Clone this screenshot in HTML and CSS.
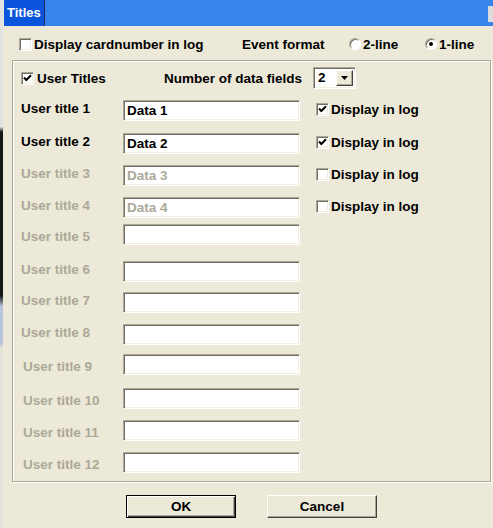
FILE: index.html
```html
<!DOCTYPE html>
<html lang="en">
<head>
    <meta charset="UTF-8">
    <meta name="viewport" content="width=device-width, initial-scale=1.0">
    <title>Titles</title>
    <link rel="stylesheet" href="styles.css">
</head>
<body>
    <div class="desk-edge"></div>

    <div class="window">
        <header class="titlebar">
            <span class="title-tab">Titles</span>
            <span class="title-stub"></span>
        </header>

        <div class="top-row">
            <label class="opt opt-card"><span class="check"></span>Display cardnumber in log</label>
            <span class="opt-event">Event format</span>
            <label class="opt opt-radio"><span class="radio"></span>2-line</label>
            <label class="opt"><span class="radio on"></span>1-line</label>
        </div>

        <section class="group">
            <div class="group-head">
                <label class="opt head-check">
                    <span class="check"><svg viewBox="0 0 13 13"><path d="M3 5.5 L5.3 8 L10 3.2" /></svg></span>User Titles
                </label>
                <span class="fields-label">Number of data fields</span>
                <div class="combo">
                    <span class="combo-value">2</span>
                    <span class="combo-btn"><svg viewBox="0 0 7 4"><polygon points="0,0 7,0 3.5,4" /></svg></span>
                </div>
            </div>

            <div class="titles">
                <div class="title-row">
                    <span class="row-label">User title 1</span>
                    <input class="field" type="text" value="Data 1">
                    <label class="opt log-check"><span class="check"><svg viewBox="0 0 13 13"><path d="M3 5.5 L5.3 8 L10 3.2" /></svg></span>Display in log</label>
                </div>
                <div class="title-row">
                    <span class="row-label">User title 2</span>
                    <input class="field" type="text" value="Data 2">
                    <label class="opt log-check"><span class="check"><svg viewBox="0 0 13 13"><path d="M3 5.5 L5.3 8 L10 3.2" /></svg></span>Display in log</label>
                </div>
                <div class="title-row">
                    <span class="row-label off">User title 3</span>
                    <input class="field" type="text" value="Data 3" disabled>
                    <label class="opt log-check"><span class="check"></span>Display in log</label>
                </div>
                <div class="title-row">
                    <span class="row-label off">User title 4</span>
                    <input class="field" type="text" value="Data 4" disabled>
                    <label class="opt log-check"><span class="check"></span>Display in log</label>
                </div>
                <div class="title-row">
                    <span class="row-label off low">User title 5</span>
                    <input class="field" type="text" disabled>
                </div>
                <div class="title-row">
                    <span class="row-label off">User title 6</span>
                    <input class="field" type="text" disabled>
                </div>
                <div class="title-row">
                    <span class="row-label off">User title 7</span>
                    <input class="field" type="text" disabled>
                </div>
                <div class="title-row">
                    <span class="row-label off">User title 8</span>
                    <input class="field" type="text" disabled>
                </div>
                <div class="title-row">
                    <span class="row-label off wide low">User title 9</span>
                    <input class="field" type="text" disabled>
                </div>
                <div class="title-row">
                    <span class="row-label off wide low">User title 10</span>
                    <input class="field" type="text" disabled>
                </div>
                <div class="title-row">
                    <span class="row-label off wide low">User title 11</span>
                    <input class="field" type="text" disabled>
                </div>
                <div class="title-row">
                    <span class="row-label off wide low">User title 12</span>
                    <input class="field" type="text" disabled>
                </div>
            </div>
        </section>

        <div class="buttons">
            <button class="btn default" type="button">OK</button>
            <button class="btn" type="button">Cancel</button>
        </div>
    </div>
</body>
</html>
```

FILE: styles.css
```css
* {
    margin: 0;
    padding: 0;
    box-sizing: border-box;
}

body {
    display: flex;
    width: 493px;
    height: 528px;
    overflow: hidden;
    background: #ece9d8;
    font-family: "Liberation Sans", Arial, sans-serif;
    font-size: 13.5px;
    font-weight: bold;
    color: #000;
}

/* bit of desktop peeking out on the left */
.desk-edge {
    width: 3px;
    background: linear-gradient(to bottom, #e2e2e2 0, #e2e2e2 24%, #161616 25%, #161616 56%, #b8c4dc 58%, #b8c4dc 65%, #e6e4da 66%);
}

.window {
    flex: 1;
    display: flex;
    flex-direction: column;
}

/* Title bar */
.titlebar {
    height: 26px;
    display: flex;
    margin-left: 1px;
    background: #3784ec;
}

.title-tab {
    width: 41px;
    padding-left: 3px;
    background: #0a55dc;
    border-right: 1px solid #1b2c66;
    color: #fff;
    font-size: 13px;
    line-height: 26px;
}

.title-stub {
    margin-left: auto;
    width: 5px;
    height: 16px;
    margin-top: 6px;
    background: #dcdcdc;
}

/* checkbox / radio bits */
.opt {
    display: flex;
    align-items: center;
    gap: 2px;
    white-space: nowrap;
}

.check {
    width: 13px;
    height: 13px;
    flex: none;
    background: #fff;
    border: 1px solid;
    border-color: #aca899 #fff #fff #aca899;
    box-shadow: inset 1px 1px 0 #716f64, inset -1px -1px 0 #f1efe2;
}

.check svg {
    display: block;
    width: 13px;
    height: 13px;
    margin: -1px;
}

.check path {
    fill: none;
    stroke: #000;
    stroke-width: 2;
}

.radio {
    width: 12px;
    height: 12px;
    flex: none;
    border-radius: 50%;
    background: #fff;
    border: 1px solid;
    border-color: #aca899 #fff #fff #aca899;
    box-shadow: inset 1px 1px 0 #716f64;
    position: relative;
}

.radio.on::after {
    content: "";
    position: absolute;
    left: 3px;
    top: 3px;
    width: 4px;
    height: 4px;
    border-radius: 50%;
    background: #000;
}

/* Top row */
.top-row {
    display: flex;
    align-items: center;
    height: 20px;
    margin-top: 8px;
    padding-left: 16px;
}

.opt-card {
    width: 223px;
}

.opt-event {
    width: 107px;
}

.opt-radio {
    width: 76px;
}

/* Group box */
.group {
    width: 479px;
    height: 422px;
    margin: 6px 0 0 9px;
    padding: 6px 0 0 8px;
    border: 1px solid #aca899;
    box-shadow: inset 1px 1px 0 #fff, 1px 1px 0 #fff;
}

.group-head {
    display: flex;
    align-items: center;
    height: 22px;
}

.head-check {
    width: 143px;
    gap: 3px;
}

.fields-label {
    width: 149px;
}

.combo {
    display: flex;
    width: 43px;
    height: 22px;
    background: #fff;
    border: 1px solid;
    border-color: #aca899 #fff #fff #aca899;
    box-shadow: inset 1px 1px 0 #716f64, inset -1px -1px 0 #f1efe2;
    padding: 2px 2px 2px 4px;
}

.combo-value {
    flex: 1;
    line-height: 16px;
}

.combo-btn {
    width: 17px;
    display: flex;
    align-items: center;
    justify-content: center;
    background: #ece9d8;
    border: 1px solid;
    border-color: #fff #404040 #404040 #fff;
    box-shadow: inset -1px -1px 0 #aca899;
}

.combo-btn svg {
    width: 7px;
    height: 4px;
}

/* Title rows - spacing copied off the original dialog */
.titles {
    display: grid;
    grid-template-rows: 33px 32px 32px 27px 37px 31px 32px 30px 34px 32px 32px 21px;
    margin-top: 11px;
}

.title-row {
    display: grid;
    grid-template-columns: 102px 177px auto;
    align-items: center;
    height: 21px;
}

/* labels sit a touch above the box centre, except the hand-moved ones */
.row-label {
    line-height: 16px;
    margin-bottom: 4px;
}

.row-label.low {
    margin-top: 4px;
    margin-bottom: 0;
}

.row-label.off {
    color: #aca899;
}

.row-label.wide {
    padding-left: 2px;
}

.field {
    width: 177px;
    height: 21px;
    padding-left: 3px;
    font: inherit;
    color: #000;
    background: #fff;
    border: 1px solid;
    border-color: #aca899 #fff #fff #aca899;
    box-shadow: inset 1px 1px 0 #716f64, inset -1px -1px 0 #f1efe2;
    outline: none;
}

.field:disabled {
    color: #aca899;
    background: #fff;
}

.log-check {
    margin: 0 0 3px 16px;
}

/* Buttons */
.buttons {
    display: flex;
    gap: 31px;
    margin-top: 13px;
    padding-left: 123px;
}

.btn {
    width: 110px;
    height: 23px;
    font: inherit;
    color: #000;
    background: #ece9d8;
    border: 1px solid;
    border-color: #fff #404040 #404040 #fff;
    box-shadow: inset -1px -1px 0 #aca899;
}

.btn.default {
    border: 1px solid #000;
    box-shadow: inset 1px 1px 0 #fff, inset -1px -1px 0 #404040, inset -2px -2px 0 #aca899;
}
```
